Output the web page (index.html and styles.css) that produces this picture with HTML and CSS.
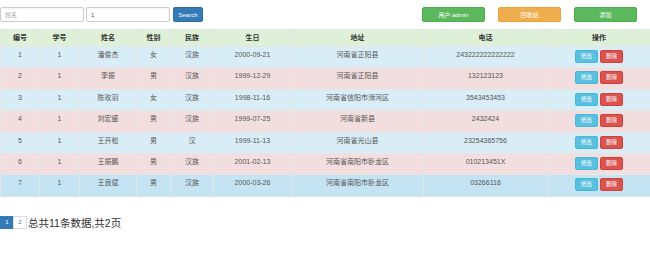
FILE: index.html
```html
<!DOCTYPE html>
<html lang="zh">
<head>
<meta charset="utf-8">
<link rel="stylesheet" href="styles.css">
</head>
<body>
<div class="toolbar">
  <div class="search">
    <input class="field" type="text" placeholder="姓名">
    <input class="field" type="text" value="1">
    <button class="btn btn-primary">Search</button>
  </div>
  <div class="actions">
    <button class="btn btn-success">用户:admin</button>
    <button class="btn btn-warning">回收站</button>
    <button class="btn btn-success">添加</button>
  </div>
</div>
<table class="grid">
  <colgroup>
    <col class="c1"><col class="c2"><col class="c3"><col class="c4"><col class="c5"><col class="c6"><col class="c7"><col class="c8"><col class="c9">
  </colgroup>
  <thead>
    <tr><th>编号</th><th>学号</th><th>姓名</th><th>性别</th><th>民族</th><th>生日</th><th>地址</th><th>电话</th><th>操作</th></tr>
  </thead>
  <tbody>
    <tr class="info"><td>1</td><td>1</td><td>潘俊杰</td><td>女</td><td>汉族</td><td>2000-09-21</td><td>河南省正阳县</td><td>243222222222222</td><td><div class="ops"><button class="mini mini-info">修改</button><button class="mini mini-danger">删除</button></div></td></tr>
    <tr class="danger"><td>2</td><td>1</td><td>李振</td><td>男</td><td>汉族</td><td>1999-12-29</td><td>河南省正阳县</td><td>132123123</td><td><div class="ops"><button class="mini mini-info">修改</button><button class="mini mini-danger">删除</button></div></td></tr>
    <tr class="info"><td>3</td><td>1</td><td>陈玫羽</td><td>女</td><td>汉族</td><td>1998-11-16</td><td>河南省信阳市浉河区</td><td>3543453453</td><td><div class="ops"><button class="mini mini-info">修改</button><button class="mini mini-danger">删除</button></div></td></tr>
    <tr class="danger"><td>4</td><td>1</td><td>刘宏盛</td><td>男</td><td>汉族</td><td>1999-07-25</td><td>河南省新县</td><td>2432424</td><td><div class="ops"><button class="mini mini-info">修改</button><button class="mini mini-danger">删除</button></div></td></tr>
    <tr class="info"><td>5</td><td>1</td><td>王开松</td><td>男</td><td>汉</td><td>1999-11-13</td><td>河南省光山县</td><td>23254365756</td><td><div class="ops"><button class="mini mini-info">修改</button><button class="mini mini-danger">删除</button></div></td></tr>
    <tr class="danger"><td>6</td><td>1</td><td>王振鹏</td><td>男</td><td>汉族</td><td>2001-02-13</td><td>河南省南阳市卧龙区</td><td>010213451X</td><td><div class="ops"><button class="mini mini-info">修改</button><button class="mini mini-danger">删除</button></div></td></tr>
    <tr class="info-dark"><td>7</td><td>1</td><td>王良斌</td><td>男</td><td>汉族</td><td>2000-03-26</td><td>河南省南阳市卧龙区</td><td>03266116</td><td><div class="ops"><button class="mini mini-info">修改</button><button class="mini mini-danger">删除</button></div></td></tr>
  </tbody>
</table>
<div class="pager">
  <span class="page active">1</span><span class="page">2</span>
  <span class="summary">总共11条数据,共2页</span>
</div>
</body>
</html>
```
FILE: styles.css
```css
* { box-sizing: border-box; }
html, body { margin: 0; padding: 0; background: #fff; }
body {
  width: 650px;
  font-family: "Liberation Sans", "Noto Sans CJK SC", sans-serif;
  color: #555;
  font-size: 7px;
}
.toolbar {
  display: flex;
  align-items: flex-start;
  padding: 7px 13px 0 0;
  height: 29px;
}
.search { display: flex; gap: 2px; }
.field {
  width: 84px;
  height: 15px;
  border: 1px solid #ccc;
  border-radius: 2px;
  padding: 0 4px;
  font-family: inherit;
  font-size: 6px;
  color: #555;
  outline: none;
  box-shadow: inset 0 1px 1px rgba(0,0,0,.05);
}
.field::placeholder { color: #aaa; }
.btn {
  border: 1px solid transparent;
  border-radius: 2px;
  height: 15px;
  padding: 0;
  font-family: inherit;
  font-size: 6px;
  color: #fff;
  cursor: pointer;
}
.btn-primary { background: #337ab7; border-color: #2e6da4; width: 30px; margin-left: 1px; }
.actions { margin-left: auto; display: flex; gap: 13px; }
.actions .btn { width: 63px; }
.btn-success { background: #5cb85c; border-color: #4cae4c; }
.btn-warning { background: #f0ad4e; border-color: #eea236; }
.grid {
  width: 650px;
  table-layout: fixed;
  border-collapse: collapse;
}
.c1 { width: 39px; } .c2 { width: 40px; } .c3 { width: 57px; }
.c4 { width: 34px; } .c5 { width: 43px; } .c6 { width: 78px; }
.c7 { width: 132px; } .c8 { width: 124px; } .c9 { width: 103px; }
.grid th, .grid td {
  border: 1px solid #e6e6e6;
  text-align: center;
  vertical-align: top;
  line-height: 10px;
  white-space: nowrap;
  overflow: hidden;
}
.grid th {
  background: #dff0d8;
  color: #333;
  font-weight: bold;
  padding: 3px 2px 3px;
  height: 17px;
}
.grid td { padding: 3px 2px 0; }
.grid tbody tr { height: 21.4px; }
.grid tr.info td { background: #d9edf7; }
.grid tr.danger td { background: #f2dede; }
.grid tr.info-dark td { background: #c4e3f3; }
.grid tr:last-child td { border-bottom-color: #d4e8f2; }
.ops { display: flex; justify-content: center; gap: 2px; }
.mini {
  width: 23px;
  height: 13px;
  border: 1px solid transparent;
  border-radius: 2px;
  padding: 0;
  font-family: inherit;
  font-size: 5.5px;
  color: #fff;
  line-height: 11px;
}
.mini-info { background: #5bc0de; border-color: #46b8da; }
.mini-danger { background: #d9534f; border-color: #d43f3a; }
.pager {
  display: flex;
  align-items: center;
  margin-top: 19px;
  height: 13px;
}
.page {
  width: 14px;
  height: 13px;
  border: 1px solid #ddd;
  font-size: 6px;
  line-height: 11px;
  text-align: center;
  color: #337ab7;
  background: #fff;
}
.page + .page { margin-left: -1px; }
.page.active { background: #337ab7; border-color: #337ab7; color: #fff; }
.summary {
  margin-left: 1px;
  font-size: 10.5px;
  color: #333;
}
```
